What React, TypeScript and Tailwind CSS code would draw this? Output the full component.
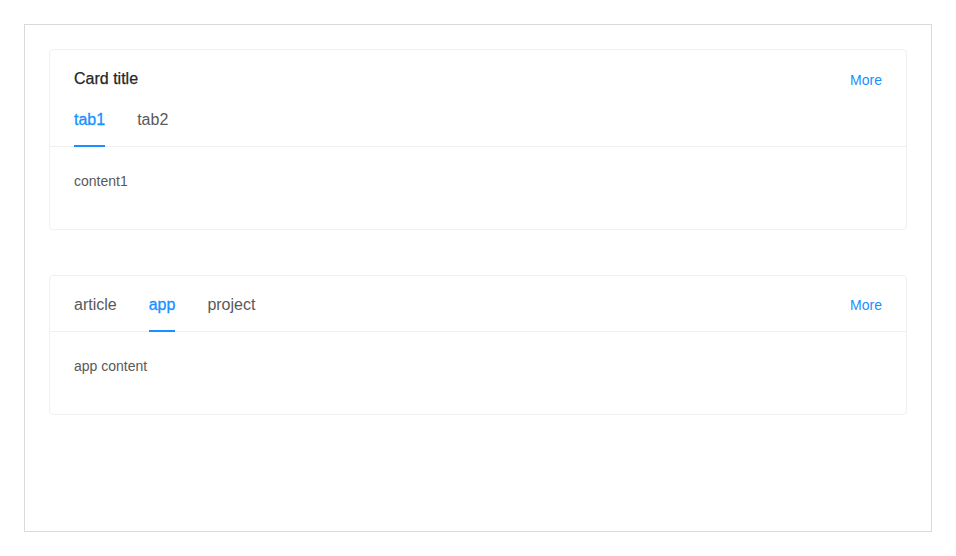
import { useState } from "react";

type Tab = { key: string; label: string; content: string };

const TabBar = ({ tabs, active, onChange, pad }: { tabs: Tab[]; active: string; onChange: (k: string) => void; pad: string }) => (
    <div className="flex gap-8">
        {tabs.map((t) => (
            <button
                key={t.key}
                onClick={() => onChange(t.key)}
                className={
                    t.key === active
                        ? `relative ${pad} text-[16px] leading-6 font-medium text-[#1890ff] [-webkit-text-stroke:0.3px_#1890ff]`
                        : `relative ${pad} text-[16px] leading-6 text-[#595959]`
                }
            >
                {t.label}
                {t.key === active && <span className="absolute left-0 right-0 -bottom-px h-[2px] bg-[#1890ff]" />}
            </button>
        ))}
    </div>
);

const TabCard = ({ title, tabs, initial }: { title?: string; tabs: Tab[]; initial: string }) => {
    const [active, setActive] = useState(initial);
    const current = tabs.find((t) => t.key === active);

    return (
        <div className="border border-[#f0f0f0] rounded-sm bg-white">
            <div className="px-6 border-b border-[#f0f0f0]">
                {title ? (
                    <>
                        <div className="flex items-center justify-between pt-[17px]">
                            <div className="text-[16px] leading-6 font-medium text-[#262626] [-webkit-text-stroke:0.25px_#262626]">{title}</div>
                            <a className="mt-[2px] text-[14px] leading-[22px] text-[#1890ff] cursor-pointer">More</a>
                        </div>
                        <TabBar tabs={tabs} active={active} onChange={setActive} pad="pt-[17px] pb-[14px]" />
                    </>
                ) : (
                    <div className="flex items-center justify-between">
                        <TabBar tabs={tabs} active={active} onChange={setActive} pad="pt-[17px] pb-[14px]" />
                        <a className="mt-[3px] text-[14px] leading-[22px] text-[#1890ff] cursor-pointer">More</a>
                    </div>
                )}
            </div>
            <div className="px-6 pt-[23px] pb-6">
                <p className="mb-[13px] text-[14px] leading-[22px] text-[#595959]">{current?.content}</p>
            </div>
        </div>
    );
};

const App = () => {
    return (
        <div className="min-h-screen bg-white p-6 font-['Liberation_Sans',Arial,sans-serif]">
            <div className="h-[508px] border border-[#d9d9d9] p-6">
                <TabCard
                    title="Card title"
                    initial="tab1"
                    tabs={[
                        { key: "tab1", label: "tab1", content: "content1" },
                        { key: "tab2", label: "tab2", content: "content2" },
                    ]}
                />
                <div className="mt-[45px]">
                    <TabCard
                        initial="app"
                        tabs={[
                            { key: "article", label: "article", content: "article content" },
                            { key: "app", label: "app", content: "app content" },
                            { key: "project", label: "project", content: "project content" },
                        ]}
                    />
                </div>
            </div>
        </div>
    );
};

export default App;
